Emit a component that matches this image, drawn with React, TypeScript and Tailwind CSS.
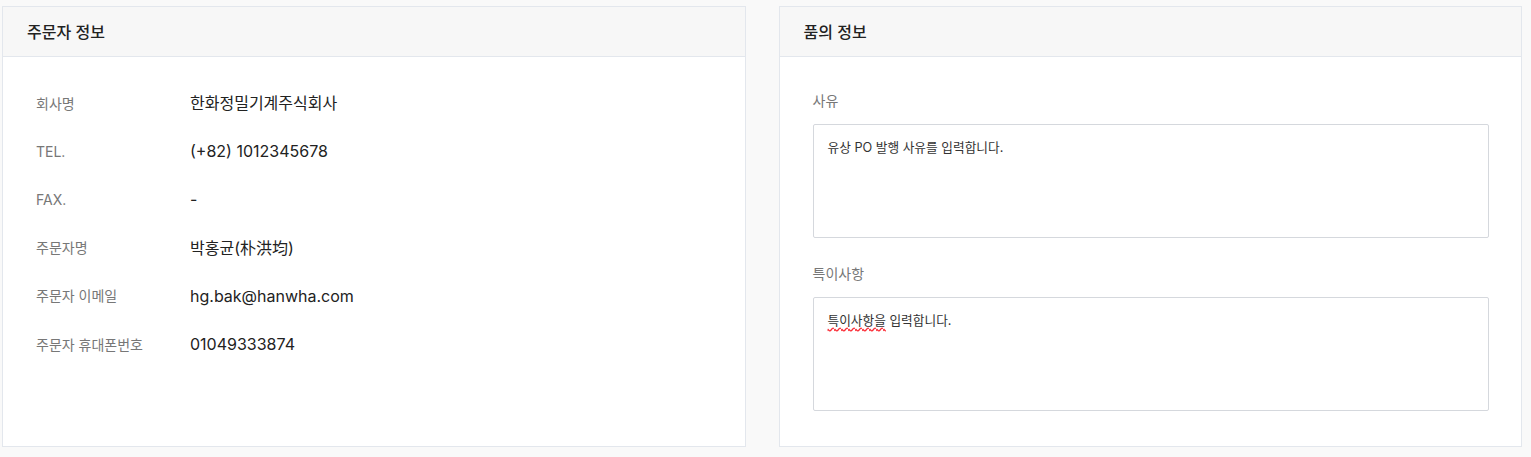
import React from "react";

const rows = [
  { label: "회사명", value: "한화정밀기계주식회사" },
  { label: "TEL.", value: "(+82) 1012345678" },
  { label: "FAX.", value: "-" },
  { label: "주문자명", value: "박홍균(朴洪均)" },
  { label: "주문자 이메일", value: "hg.bak@hanwha.com" },
  { label: "주문자 휴대폰번호", value: "01049333874" },
];

function Panel({ title, children }: { title: string; children: React.ReactNode }) {
  return (
    <div className="flex-1 flex flex-col bg-white border border-[#e3e7ed]">
      <div className="h-[50px] flex items-center px-6 bg-[#f7f7f7] border-b border-[#e3e7ed]">
        <h2 className="text-[16px] font-medium text-[#222]">{title}</h2>
      </div>
      <div className="flex-1">{children}</div>
    </div>
  );
}

export default function App() {
  return (
    <div
      className="w-[1531px] h-[457px] bg-[#f9f9f9] pl-[2px] pr-[9px] pt-[6px] pb-[10px] flex gap-[33px]"
      style={{ fontFamily: "Inter, 'Noto Sans CJK KR', sans-serif" }}
    >
      <Panel title="주문자 정보">
        <div className="pt-[22px] px-[33px]">
          {rows.map((r) => (
            <div key={r.label} className="h-[48.2px] flex items-center">
              <div className="w-[154px] text-[14px] text-[#777]">{r.label}</div>
              <div className="text-[16px] text-[#222]">{r.value}</div>
            </div>
          ))}
        </div>
      </Panel>
      <Panel title="품의 정보">
        <div className="pt-[34px] pl-[33px] pr-8 flex flex-col">
          <label className="h-5 leading-5 text-[14px] text-[#777]">사유</label>
          <div className="mt-[13px] h-[114px] border border-[#d5d8dd] rounded-[2px] px-[14px] pt-[13px] text-[12.7px] leading-5 text-[#333]">
            유상 PO 발행 사유를 입력합니다.
          </div>
          <label className="mt-[26px] h-5 leading-5 text-[14px] text-[#777]">특이사항</label>
          <div className="mt-[13px] h-[114px] border border-[#d5d8dd] rounded-[2px] px-[14px] pt-[13px] text-[12.7px] leading-5 text-[#333]">
            <span className="underline decoration-wavy decoration-red-500 underline-offset-2">특이사항을</span> 입력합니다.
          </div>
        </div>
      </Panel>
    </div>
  );
}
